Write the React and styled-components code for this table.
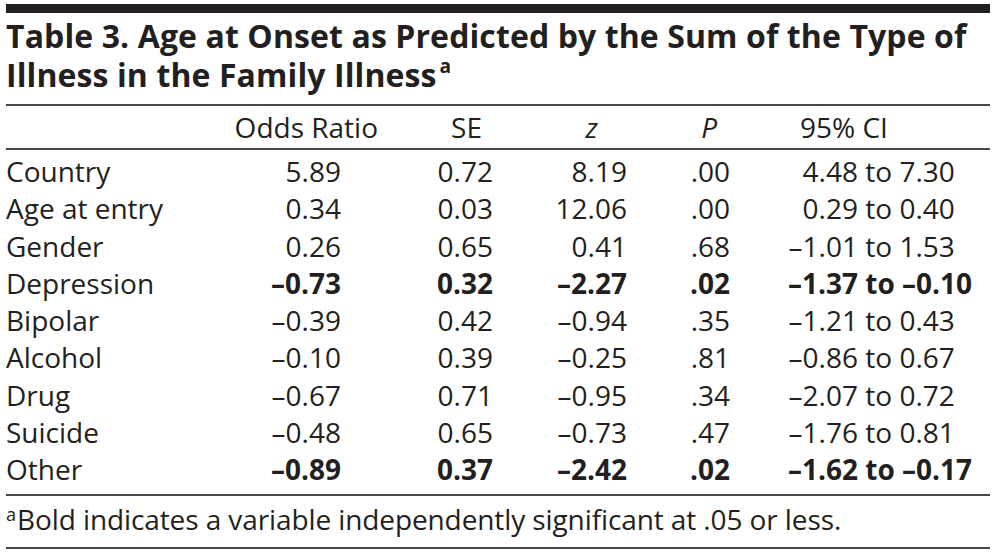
import styled, { createGlobalStyle } from 'styled-components'

const GlobalStyle = createGlobalStyle`
  html, body {
    margin: 0;
    padding: 0;
    background: #ffffff;
  }
  body {
    color: #231f20;
    font-family: 'Open Sans', 'Liberation Sans', sans-serif;
  }
`

const COLUMNS = '194px 190px 120px 140px 100px 240px'

const rows = [
  { label: 'Country', odds: '5.89', se: '0.72', z: '8.19', p: '.00', lo: '4.48', hi: '7.30' },
  { label: 'Age at entry', odds: '0.34', se: '0.03', z: '12.06', p: '.00', lo: '0.29', hi: '0.40' },
  { label: 'Gender', odds: '0.26', se: '0.65', z: '0.41', p: '.68', lo: '–1.01', hi: '1.53' },
  { label: 'Depression', odds: '–0.73', se: '0.32', z: '–2.27', p: '.02', lo: '–1.37', hi: '–0.10', bold: true },
  { label: 'Bipolar', odds: '–0.39', se: '0.42', z: '–0.94', p: '.35', lo: '–1.21', hi: '0.43' },
  { label: 'Alcohol', odds: '–0.10', se: '0.39', z: '–0.25', p: '.81', lo: '–0.86', hi: '0.67' },
  { label: 'Drug', odds: '–0.67', se: '0.71', z: '–0.95', p: '.34', lo: '–2.07', hi: '0.72' },
  { label: 'Suicide', odds: '–0.48', se: '0.65', z: '–0.73', p: '.47', lo: '–1.76', hi: '0.81' },
  { label: 'Other', odds: '–0.89', se: '0.37', z: '–2.42', p: '.02', lo: '–1.62', hi: '–0.17', bold: true },
]

const Page = styled.div`
  width: 984px;
  padding: 4px 0 0 6px;
`

const TopBar = styled.div`
  height: 9px;
  background: #231f20;
`

const Title = styled.h1`
  margin: 4px 0 10px;
  font-size: 32px;
  line-height: 38.5px;
  font-weight: 700;
  letter-spacing: 0.1px;
`

const Sup = styled.span`
  display: inline-block;
  font-size: 0.6em;
  line-height: 1;
  vertical-align: top;
  margin-left: 3px;
`

const Rule = styled.div`
  height: 2px;
  background: #4a4848;
`

const Row = styled.div`
  display: grid;
  grid-template-columns: ${COLUMNS};
  align-items: center;
  height: ${({ $height }) => $height}px;
  font-size: 28px;
  font-weight: ${({ $bold }) => ($bold ? 700 : 400)};
`

const Body = styled.div`
  padding: 2px 0 6px;
`

const Cell = styled.div`
  text-align: ${({ $align }) => $align || 'right'};
  padding-right: ${({ $pr }) => $pr || 0}px;
  padding-left: ${({ $pl }) => $pl || 0}px;
  white-space: nowrap;
`

const Label = styled(Cell)`
  font-weight: 400;
`

const Italic = styled.span`
  font-style: italic;
`

const Interval = styled.div`
  display: flex;
  white-space: nowrap;
`

const Low = styled.span`
  width: 108px;
  text-align: right;
`

const Footnote = styled.p`
  margin: 0;
  padding: 5px 0 10px;
  font-size: 28px;
  line-height: 36px;
  letter-spacing: -0.1px;
`

const NoteMark = styled(Sup)`
  margin: 0 1px 0 0;
  font-size: 0.65em;
  padding-top: 4px;
`

export default function App() {
  return (
    <Page>
      <GlobalStyle />
      <TopBar />
      <Title>
        Table 3. Age at Onset as Predicted by the Sum of the Type of Illness in the Family Illness<Sup>a</Sup>
      </Title>
      <Rule />
      <Row $height={42}>
        <Cell $align="left" />
        <Cell $pr={12}>Odds Ratio</Cell>
        <Cell $pr={28}>SE</Cell>
        <Cell $pr={52}>
          <Italic>z</Italic>
        </Cell>
        <Cell $pr={33}>
          <Italic>P</Italic>
        </Cell>
        <Cell $align="left" $pl={50}>95% CI</Cell>
      </Row>
      <Rule />
      <Body>
        {rows.map((r) => (
          <Row key={r.label} $height={37.3} $bold={r.bold}>
            <Label $align="left">{r.label}</Label>
            <Cell $pr={49}>{r.odds}</Cell>
            <Cell $pr={17}>{r.se}</Cell>
            <Cell $pr={23}>{r.z}</Cell>
            <Cell $pr={20}>{r.p}</Cell>
            <Interval>
              <Low>{r.lo}</Low>
              <span>&nbsp;to&nbsp;{r.hi}</span>
            </Interval>
          </Row>
        ))}
      </Body>
      <Rule />
      <Footnote>
        <NoteMark>a</NoteMark>Bold indicates a variable independently significant at .05 or less.
      </Footnote>
      <Rule />
    </Page>
  )
}
